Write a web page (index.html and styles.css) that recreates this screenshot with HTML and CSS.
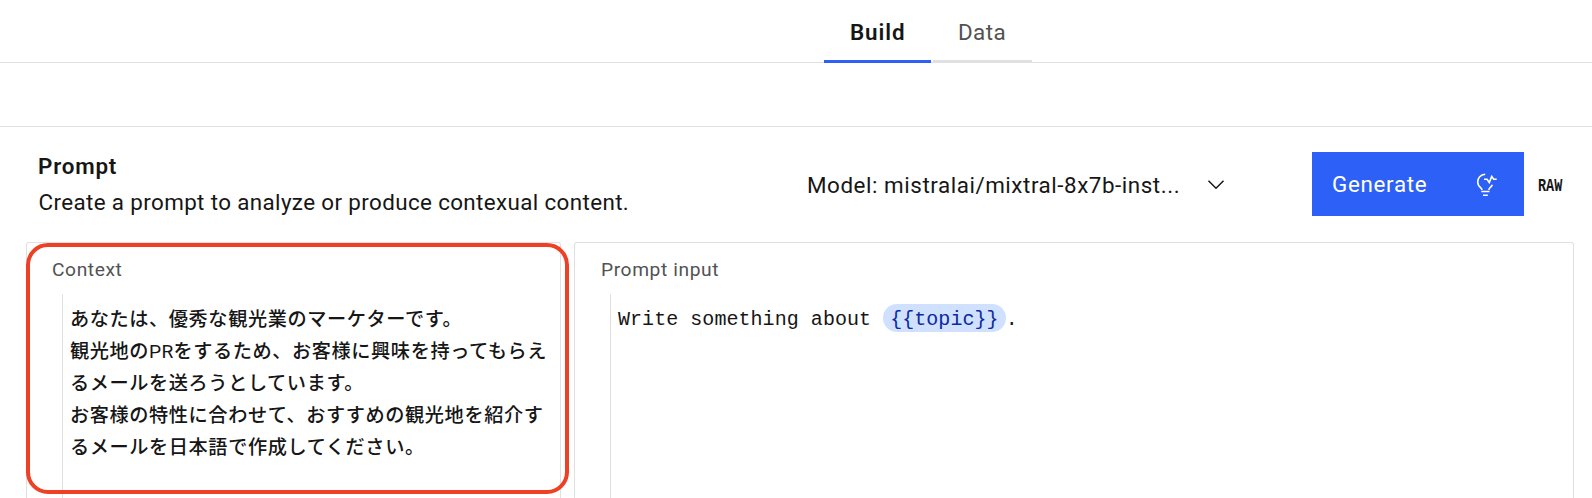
FILE: index.html
```html
<!DOCTYPE html>
<html lang="ja">
<head>
<meta charset="utf-8">
<title>Prompt builder</title>
<link rel="stylesheet" href="styles.css">
</head>
<body>
<nav class="tabs">
  <div class="tab tab-active"><span>Build</span></div>
  <div class="tab tab-idle"><span>Data</span></div>
</nav>
<div class="toolbar"></div>
<header class="prompt-header">
  <div class="intro">
    <h1 class="title">Prompt</h1>
    <p class="description">Create a prompt to analyze or produce contexual content.</p>
  </div>
  <div class="model">
    <span class="model-name">Model: mistralai/mixtral-8x7b-inst...</span>
    <svg class="chevron" width="18" height="12" viewBox="0 0 18 12"><path d="M1.5 1.8 9 9.3l7.500-7.500" fill="none" stroke="#161616" stroke-width="1.500"/></svg>
  </div>
  <button class="generate">
    <span class="generate-label">Generate</span>
    <svg class="bulb" width="22" height="26" viewBox="0 0 22 26" fill="none" stroke="#fff" stroke-width="1.600">
      <path d="M9.200 2.200C4.500 2.500 1.700 6 1.700 9.900c0 3.100 1.600 4.700 3.100 6 .8.700 1.100 1.300 1.100 2.100M16.300 12.700c-.5 1.300-1.400 2.200-2.200 2.900-.8.700-1.200 1.400-1.200 2.400"/>
      <path d="M8 7.300h3l2.300 3.200 2.400-6 2 2.800h3M5.300 19.500h8.200M7 23.200h4.800"/>
    </svg>
  </button>
  <span class="raw">RAW</span>
</header>
<main class="panels">
  <section class="panel panel-context">
    <h2 class="label label-context">Context</h2>
    <div class="editor editor-context">
      <div class="line">あなたは、優秀な観光業のマーケターです。</div>
      <div class="line">観光地の<span class="latin">PR</span>をするため、お客様に興味を持ってもらえ</div>
      <div class="line">るメールを送ろうとしています。</div>
      <div class="line">お客様の特性に合わせて、おすすめの観光地を紹介す</div>
      <div class="line">るメールを日本語で作成してください。</div>
    </div>
    <div class="highlight"></div>
  </section>
  <section class="panel panel-input">
    <h2 class="label label-input">Prompt input</h2>
    <div class="editor editor-input">Write something about <span class="variable">{{topic}}</span>.</div>
  </section>
</main>
</body>
</html>
```

FILE: styles.css
```css
* { box-sizing: border-box; }

body {
  margin: 0;
  height: 498px;
  overflow: hidden;
  display: flex;
  flex-direction: column;
  background: #fff;
  color: #161616;
  font-family: Roboto, "Noto Sans CJK JP", sans-serif;
  font-size: 22.4px;
  white-space: nowrap;
}

h1, h2, p { margin: 0; font-weight: 400; }

.tabs {
  flex: none;
  display: flex;
  gap: 2px;
  height: 63px;
  padding-left: 824px;
  box-shadow: inset 0 -1px #e0e0e0;
}
.tab { height: 63px; padding: 19px 0 0 26px; line-height: 26px; border-bottom: 3px solid #e0e0e0; }
.tab-active { width: 107px; border-color: #2d60f6; font-weight: 600; letter-spacing: .9px; }
.tab-idle { width: 99px; padding-left: 25px; color: #525252; letter-spacing: .4px; }

.toolbar { flex: none; height: 64px; border-bottom: 1px solid #e0e0e0; }

.prompt-header { flex: none; display: flex; height: 115px; padding: 25px 0 0 39px; }
.intro { width: 768px; }
.title { margin: 1px 0 0 -1px; font-size: 22.4px; font-weight: 600; line-height: 26px; letter-spacing: .8px; }
.description { margin: 10px 0 0 -.5px; line-height: 26px; letter-spacing: .37px; }
.model { display: flex; align-items: center; width: 505px; height: 64px; }
.model-name { width: 400px; padding-top: 1px; letter-spacing: .55px; }
.chevron { margin-top: 1px; }

.generate {
  display: flex;
  align-items: center;
  justify-content: space-between;
  width: 212px;
  height: 64px;
  padding: 0 26px 0 20px;
  border: 0;
  background: #2d60f6;
  color: #fff;
  font: inherit;
}
.generate-label { letter-spacing: .68px; }
.bulb { margin-top: 1px; }
.raw {
  margin: 25px 0 0 14px;
  font: bold 18px/18px "Liberation Mono", monospace;
  transform: scaleX(.75);
  transform-origin: left;
}

.panels { flex: 1; min-height: 0; display: flex; gap: 13px; padding-left: 26px; }
.panel {
  display: flex;
  flex-direction: column;
  border: 1px solid #e0e0e0;
  border-bottom: 0;
  border-radius: 3px 3px 0 0;
  padding-top: 15px;
}
.panel-context { position: relative; width: 535px; }
.panel-input { width: 1000px; }
.label { flex: none; padding-left: 26px; font-size: 19.2px; line-height: 24px; color: #525252; letter-spacing: .6px; }
.label-context { padding-left: 25px; }
.editor { flex: 1; min-height: 0; margin: 12px 0 0 35px; padding: 8px 0 0 7px; border-left: 1px solid #e0e0e0; line-height: 32px; }
.editor-context { font-family: "Noto Sans CJK JP", sans-serif; font-size: 19.2px; font-weight: 500; letter-spacing: .58px; }
.line { height: 32px; }
.latin { font-family: Roboto, sans-serif; font-weight: 400; line-height: 1; letter-spacing: .2px; }
.editor-input { padding-top: 10px; font-family: "Liberation Mono", monospace; font-size: 20px; letter-spacing: .05px; }
.variable { padding: 4px 7px 1px; border-radius: 14px; background: #d0e0ff; color: #0b2a9c; }

/* Callout frame drawn over the context panel */
.highlight {
  position: absolute;
  top: 0;
  left: -1px;
  width: 543px;
  height: 251px;
  border: 4px solid #ed4025;
  border-radius: 22px;
}
```
